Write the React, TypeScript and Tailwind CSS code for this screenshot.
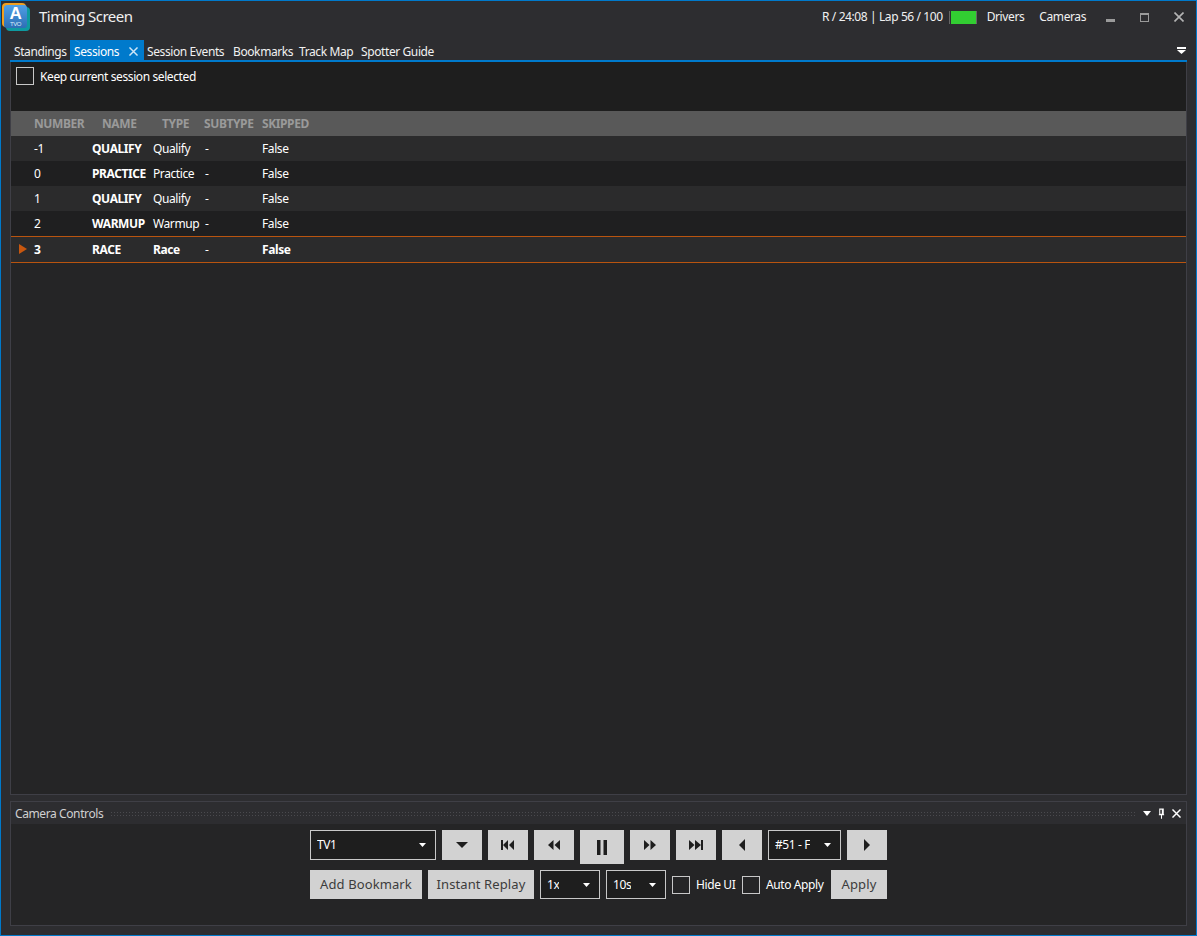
const rows = [
  { number: "-1", name: "QUALIFY", type: "Qualify", subtype: "-", skipped: "False" },
  { number: "0", name: "PRACTICE", type: "Practice", subtype: "-", skipped: "False" },
  { number: "1", name: "QUALIFY", type: "Qualify", subtype: "-", skipped: "False" },
  { number: "2", name: "WARMUP", type: "Warmup", subtype: "-", skipped: "False" },
];

const gridCols = "grid grid-cols-[58px_61px_51px_58px_1fr] pl-[23px] items-center";

function Logo() {
  return (
    <svg viewBox="0 0 28 28" className="w-[28px] h-[28px] shrink-0 mb-[7px]">
      <defs>
        <linearGradient id="logo-blue" x1="0" y1="0" x2="0" y2="1">
          <stop offset="0" stopColor="#4f9fe6" />
          <stop offset="1" stopColor="#2c6fb5" />
        </linearGradient>
      </defs>
      <rect x="0" y="0" width="24" height="24" rx="4" fill="#f0a01e" />
      <rect x="4" y="4" width="24" height="24" rx="4" fill="#0e9aa0" />
      <rect x="2" y="2" width="23" height="23" rx="3" fill="url(#logo-blue)" />
      <text x="13.5" y="16" textAnchor="middle" fontSize="17" fontWeight="700" fill="white" fontFamily="Liberation Sans, sans-serif">A</text>
      <text x="13.5" y="23" textAnchor="middle" fontSize="6" fill="#dcecfa" fontFamily="Liberation Sans, sans-serif">TVO</text>
    </svg>
  );
}

function CloseIcon({ className }: { className: string }) {
  return (
    <svg viewBox="0 0 10 10" className={className} fill="none" stroke="currentColor" strokeWidth="1.6">
      <path d="M0.5 0.5L9.5 9.5M9.5 0.5L0.5 9.5" />
    </svg>
  );
}

function Caret() {
  return (
    <svg viewBox="0 0 7 4" className="w-[7px] h-[4px] fill-white shrink-0">
      <path d="M0 0H7L3.5 4Z" />
    </svg>
  );
}

function Select({ label, className }: { label: string; className: string }) {
  return (
    <div className={`flex items-center justify-between border border-[#c8c8c8] bg-[#1e1e1e] pl-[6px] pr-[9px] text-white ${className}`}>
      <span className="max-w-[35px] overflow-hidden whitespace-nowrap">{label}</span>
      <Caret />
    </div>
  );
}

function IconButton({
  d,
  className = "w-[40px] h-[30px]",
  iconClass = "w-[16px] h-[12px]",
}: {
  d: string;
  className?: string;
  iconClass?: string;
}) {
  return (
    <button className={`flex items-center justify-center bg-[#d2d2d2] shrink-0 ${className}`}>
      <svg viewBox="0 0 16 12" preserveAspectRatio="none" className={`fill-[#1e1e1e] ${iconClass}`}>
        <path d={d} />
      </svg>
    </button>
  );
}

function TextButton({ label, className }: { label: string; className: string }) {
  return (
    <button className={`h-[29px] bg-[#d2d2d2] text-[#3c3c3c] text-[13px] tracking-[0.1px] shrink-0 ${className}`}>
      {label}
    </button>
  );
}

function CheckBox({ className = "w-[18px] h-[18px]" }: { className?: string }) {
  return <div className={`border border-[#c8c8c8] shrink-0 ${className}`} />;
}

export default function App() {
  return (
    <div className="w-[1197px] h-[936px] flex flex-col overflow-hidden bg-[#2d2d30] border border-[#007acc] text-[12px] text-[#f1f1f1] font-['Noto_Sans',sans-serif] tracking-[-0.4px]">
      {/* title bar */}
      <div className="h-[39px] flex items-center shrink-0 pl-[1px]">
        <Logo />
        <span className="ml-[9px] text-[15px] tracking-[-0.5px] mb-[9px]">Timing Screen</span>
        <div className="ml-auto flex items-center mb-[7px]">
          <span>R / 24:08 | Lap 56 / 100</span>
          <div className="ml-[6px] w-[1px] h-[13px] bg-[#666]" />
          <div className="ml-[1px] w-[25px] h-[13px] bg-[#32cd32]" />
          <div className="w-[1px] h-[13px] bg-[#666]" />
          <span className="ml-[10px]">Drivers</span>
          <span className="ml-[15px]">Cameras</span>
          <div className="ml-[20px] w-[9px] h-[3px] bg-[#9a9a9a] mt-[7px]" />
          <div className="ml-[25px] w-[9px] h-[9px] border border-[#9a9a9a] border-t-2" />
          <CloseIcon className="ml-[25px] mr-[12px] w-[10px] h-[10px] text-[#b4b4b4]" />
        </div>
      </div>

      {/* tabs */}
      <div className="h-[20px] flex items-start shrink-0 pl-[9px] pr-[9px] whitespace-nowrap leading-[16px]">
        <span className="pl-[4px] pt-[4px] w-[60px]">Standings</span>
        <div className="w-[74px] h-full flex items-start pl-[4px] pt-[4px] bg-[#007acc] text-white">
          <span>Sessions</span>
          <CloseIcon className="ml-auto mr-[6px] mt-[3px] w-[9px] h-[9px] text-[#cfe6f7]" />
        </div>
        <span className="ml-[3px] pt-[4px] w-[86px]">Session Events</span>
        <span className="pt-[4px] w-[66px]">Bookmarks</span>
        <span className="pt-[4px] w-[62px]">Track Map</span>
        <span className="pt-[4px]">Spotter Guide</span>
        <svg viewBox="0 0 9 7" className="ml-auto mr-[1px] mt-[7px] w-[9px] h-[7px] fill-white">
          <path d="M0 0H9V2H0ZM0 3H9L4.5 7Z" />
        </svg>
      </div>

      {/* main panel */}
      <div className="mx-[9px] h-[735px] shrink-0 flex flex-col border-t-2 border-[#007acc] bg-[#252526]">
        <div className="h-[49px] shrink-0 bg-[#1e1e1e] flex items-start pl-[5px] pt-[5px] border-x border-[#3f3f46]">
          <CheckBox className="w-[18px] h-[18px]" />
          <span className="ml-[6px] mt-[1px] text-white">Keep current session selected</span>
        </div>
        <div className="flex-1 flex flex-col border-x border-b border-[#3f3f46]">
          <div className={`${gridCols} h-[25px] shrink-0 bg-[#595959] text-[#9a9a9a] font-bold`}>
            <span>NUMBER</span>
            <span className="pl-[10px]">NAME</span>
            <span className="pl-[9px]">TYPE</span>
            <span>SUBTYPE</span>
            <span>SKIPPED</span>
          </div>
          {rows.map((row, i) => (
            <div key={i} className={`${gridCols} h-[25px] shrink-0 text-white ${i % 2 === 0 ? "bg-[#2b2b2c]" : "bg-[#1f1f20]"}`}>
              <span>{row.number}</span>
              <span className="font-bold">{row.name}</span>
              <span>{row.type}</span>
              <span className="pl-[1px]">{row.subtype}</span>
              <span>{row.skipped}</span>
            </div>
          ))}
          <div className={`${gridCols} relative h-[27px] shrink-0 border-y border-[#b9540f] bg-[#2b2b2c] text-white font-bold`}>
            <svg viewBox="0 0 8 10" className="absolute left-[8px] top-[7px] w-[8px] h-[10px] fill-[#c8570f]">
              <path d="M0 0L8 5L0 10Z" />
            </svg>
            <span>3</span>
            <span>RACE</span>
            <span>Race</span>
            <span className="pl-[1px] font-normal">-</span>
            <span>False</span>
          </div>
        </div>
      </div>

      {/* camera controls panel */}
      <div className="mx-[9px] mt-[6px] h-[125px] shrink-0 flex flex-col border border-[#3f3f46] bg-[#252526]">
        <div className="h-[22px] shrink-0 bg-[#2d2d30] flex items-center pl-[4px] pr-[4px] text-[#d0d0d0]">
          <span className="mt-[1px]">Camera Controls</span>
          <div className="flex-1 ml-[7px] mr-[8px] h-[5px] bg-[radial-gradient(#4a4a4e_1px,transparent_1px)] bg-[length:3px_3px]" />
          <svg viewBox="0 0 8 5" className="w-[8px] h-[5px] fill-white">
            <path d="M0 0H8L4 5Z" />
          </svg>
          <svg viewBox="0 0 8 12" className="ml-[7px] w-[7px] h-[11px]" fill="none" stroke="white" strokeWidth="1.2">
            <path d="M2 1H6V7H2ZM1 7.5H7M4 8V12M5 1V7" />
          </svg>
          <CloseIcon className="ml-[7px] mr-[1px] w-[9px] h-[9px] text-white" />
        </div>
        <div className="flex-1 flex flex-col gap-[6px] pl-[299px] pt-[6px]">
          <div className="flex items-start gap-[6px] h-[34px]">
            <Select label="TV1" className="w-[126px] h-[30px]" />
            <IconButton d="M2 3H14L8 9Z" />
            <IconButton d="M1 1H3V11H1ZM8 1V11L3 6ZM14 1V11L9 6Z" />
            <IconButton d="M7.5 1V11L2 6ZM14 1V11L8.5 6Z" />
            <IconButton d="M3 0H6.5V12H3ZM9.5 0H13V12H9.5Z" className="w-[44px] h-[34px]" iconClass="w-[16px] h-[15px]" />
            <IconButton d="M2 1V11L7.5 6ZM8.5 1V11L14 6Z" />
            <IconButton d="M1 1V11L6.5 6ZM7 1V11L13 6ZM13 1H15V11H13Z" />
            <IconButton d="M11 0V12L5 6Z" />
            <Select label="#51 - F" className="w-[73px] h-[30px]" />
            <IconButton d="M5 0V12L11 6Z" />
          </div>
          <div className="flex items-center">
            <TextButton label="Add Bookmark" className="w-[112px]" />
            <TextButton label="Instant Replay" className="ml-[6px] w-[106px]" />
            <Select label="1x" className="ml-[6px] w-[60px] h-[29px]" />
            <Select label="10s" className="ml-[6px] w-[60px] h-[29px]" />
            <CheckBox className="ml-[6px] w-[18px] h-[18px]" />
            <span className="ml-[6px] w-[40px] whitespace-nowrap text-white">Hide UI</span>
            <CheckBox className="ml-[6px] w-[18px] h-[18px]" />
            <span className="ml-[6px] w-[60px] whitespace-nowrap text-white">Auto Apply</span>
            <TextButton label="Apply" className="ml-[5px] w-[56px]" />
          </div>
        </div>
      </div>
    </div>
  );
}
